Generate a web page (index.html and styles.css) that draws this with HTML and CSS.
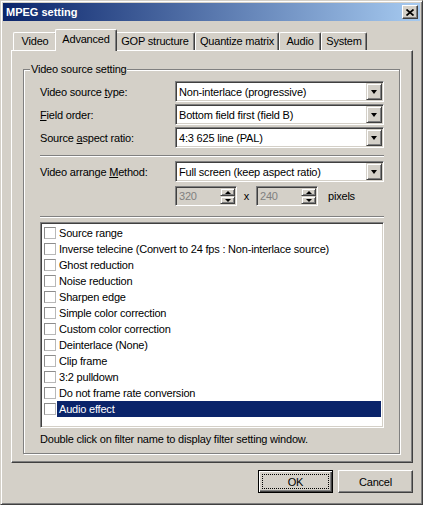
FILE: index.html
```html
<!DOCTYPE html>
<html>
<head>
<meta charset="utf-8">
<link rel="stylesheet" href="styles.css">
</head>
<body>
<div class="window">
  <div class="titlebar">
    <span class="title">MPEG setting</span>
    <span class="close">
      <svg width="8" height="7" viewBox="0 0 8 7"><path d="M0.5 0.5 L7.5 6.5 M7.5 0.5 L0.5 6.5" stroke="#000" stroke-width="1.7" fill="none"/></svg>
    </span>
  </div>
  <div class="content">
    <div class="tabs">
      <div class="tab t-video">Video</div>
      <div class="tab sel t-adv">Advanced</div>
      <div class="tab t-gop">GOP structure</div>
      <div class="tab t-quant">Quantize matrix</div>
      <div class="tab t-audio">Audio</div>
      <div class="tab t-sys">System</div>
    </div>
    <div class="panel">
      <div class="group">
        <div class="group-title">Video source setting</div>
        <div class="group-body">
          <div class="row first">
            <span class="label">Video source <u>t</u>ype:</span>
            <div class="combo"><span class="val">Non-interlace (progressive)</span><span class="drop"><i class="tri-down"></i></span></div>
          </div>
          <div class="row">
            <span class="label"><u>F</u>ield order:</span>
            <div class="combo"><span class="val">Bottom field first (field B)</span><span class="drop"><i class="tri-down"></i></span></div>
          </div>
          <div class="row">
            <span class="label">Source <u>a</u>spect ratio:</span>
            <div class="combo"><span class="val">4:3 625 line (PAL)</span><span class="drop"><i class="tri-down"></i></span></div>
          </div>
          <div class="sep sep1"></div>
          <div class="row">
            <span class="label">Video arrange <u>M</u>ethod:</span>
            <div class="combo"><span class="val">Full screen (keep aspect ratio)</span><span class="drop"><i class="tri-down"></i></span></div>
          </div>
          <div class="spin-row">
            <div class="spin"><span class="val">320</span><span class="spin-btns"><span class="sb"><i class="tri-up"></i></span><span class="sb"><i class="tri-dn"></i></span></span></div>
            <span class="times">x</span>
            <div class="spin"><span class="val">240</span><span class="spin-btns"><span class="sb"><i class="tri-up"></i></span><span class="sb"><i class="tri-dn"></i></span></span></div>
            <span class="pixels">pixels</span>
          </div>
          <div class="sep sep2"></div>
          <div class="list">
            <div class="item"><span class="chk"></span><span class="name">Source range</span></div>
            <div class="item"><span class="chk"></span><span class="name">Inverse telecine (Convert to 24 fps : Non-interlace source)</span></div>
            <div class="item"><span class="chk"></span><span class="name">Ghost reduction</span></div>
            <div class="item"><span class="chk"></span><span class="name">Noise reduction</span></div>
            <div class="item"><span class="chk"></span><span class="name">Sharpen edge</span></div>
            <div class="item"><span class="chk"></span><span class="name">Simple color correction</span></div>
            <div class="item"><span class="chk"></span><span class="name">Custom color correction</span></div>
            <div class="item"><span class="chk"></span><span class="name">Deinterlace (None)</span></div>
            <div class="item"><span class="chk"></span><span class="name">Clip frame</span></div>
            <div class="item"><span class="chk"></span><span class="name">3:2 pulldown</span></div>
            <div class="item"><span class="chk"></span><span class="name">Do not frame rate conversion</span></div>
            <div class="item selected"><span class="chk"></span><span class="name">Audio effect</span></div>
          </div>
          <div class="hint">Double click on filter name to display filter setting window.</div>
        </div>
      </div>
    </div>
    <div class="buttons">
      <div class="btn default"><span class="focus">OK</span></div>
      <div class="btn">Cancel</div>
    </div>
  </div>
</div>
</body>
</html>
```
FILE: styles.css
```css
* { box-sizing: border-box; }
html, body { margin: 0; padding: 0; }
body {
  background: #D4D0C8;
  font-family: "Liberation Sans", Arial, sans-serif;
  font-size: 11px;
  letter-spacing: -0.2px;
  color: #000;
}
.window {
  width: 423px;
  height: 505px;
  border: 1px solid;
  border-color: #D4D0C8 #404040 #404040 #D4D0C8;
  box-shadow: inset 1px 1px 0 #fff, inset -1px -1px 0 #808080;
  padding: 2px;
  display: flex;
  flex-direction: column;
  background: #D4D0C8;
}
.titlebar {
  height: 18px;
  background: linear-gradient(to right, #0A246A, #A6CAF0);
  display: flex;
  align-items: center;
  padding: 0 2px 0 3px;
  color: #fff;
  font-weight: bold;
  letter-spacing: 0;
  flex: none;
}
.title { line-height: 18px; }
.close {
  margin-left: auto;
  width: 16px;
  height: 14px;
  background: #D4D0C8;
  border: 1px solid;
  border-color: #fff #404040 #404040 #fff;
  box-shadow: inset -1px -1px 0 #808080;
  display: flex;
  align-items: center;
  justify-content: center;
}
.close svg { display: block; }
.content {
  padding: 8px 7px 0 8px;
  display: flex;
  flex-direction: column;
}
.tabs {
  display: flex;
  align-items: flex-end;
  height: 21px;
  padding-left: 2px;
}
.tab {
  height: 18px;
  line-height: 17px;
  text-align: center;
  border: 1px solid;
  border-bottom: none;
  border-color: #fff #404040 #404040 #fff;
  box-shadow: inset -1px 0 0 #808080;
  border-radius: 2px 2px 0 0;
  white-space: nowrap;
  background: #D4D0C8;
}
.tab.sel {
  height: 22px;
  margin: 0 -2px -1px -2px;
  line-height: 19px;
  position: relative;
  z-index: 1;
}
.t-video { width: 44px; }
.t-adv { width: 62px; }
.t-gop { width: 80px; }
.t-quant { width: 84px; }
.t-audio { width: 42px; }
.t-sys { width: 46px; }
.panel {
  height: 413px;
  border: 1px solid;
  border-color: #fff #404040 #404040 #fff;
  box-shadow: inset -1px -1px 0 #808080;
  padding: 18px 12px 8px 11px;
  display: flex;
  flex-direction: column;
}
.group {
  flex: 1;
  border: 1px solid #808080;
  box-shadow: inset 1px 1px 0 #fff, 1px 1px 0 #fff;
  display: flex;
  flex-direction: column;
}
.group-title {
  margin: -7px 0 0 6px;
  padding: 0 1px;
  line-height: 13px;
  background: #D4D0C8;
  width: fit-content;
}
.group-body {
  padding: 0 15px 0 16px;
  display: flex;
  flex-direction: column;
}
.row {
  display: flex;
  align-items: center;
  margin-top: 2px;
}
.row.first { margin-top: 5px; }
.label { width: 135px; flex: none; white-space: nowrap; }
.combo {
  flex: 1;
  height: 21px;
  border: 1px solid;
  border-color: #808080 #fff #fff #808080;
  box-shadow: inset 1px 1px 0 #404040, inset -1px -1px 0 #D4D0C8;
  background: #fff;
  padding: 1px;
  display: flex;
  align-items: center;
}
.combo .val { flex: 1; padding-left: 2px; white-space: nowrap; }
.drop {
  width: 16px;
  height: 17px;
  background: #D4D0C8;
  border: 1px solid;
  border-color: #D4D0C8 #404040 #404040 #D4D0C8;
  box-shadow: inset 1px 1px 0 #fff, inset -1px -1px 0 #808080;
  display: flex;
  align-items: center;
  justify-content: center;
}
.tri-down {
  width: 0; height: 0;
  border-left: 3.5px solid transparent;
  border-right: 3.5px solid transparent;
  border-top: 4px solid #000;
  display: block;
}
.sep {
  height: 2px;
  border-top: 1px solid #808080;
  border-bottom: 1px solid #fff;
}
.sep1 { margin: 7px 0 4px; }
.sep1 + .row { margin-top: 0; }
.spin-row {
  display: flex;
  align-items: center;
  margin-top: 4px;
  padding-left: 135px;
}
.spin {
  width: 62px;
  height: 20px;
  border: 1px solid;
  border-color: #808080 #fff #fff #808080;
  box-shadow: inset 1px 1px 0 #404040, inset -1px -1px 0 #D4D0C8;
  background: #D4D0C8;
  padding: 1px;
  display: flex;
  align-items: center;
}
.spin .val { flex: 1; color: #808080; padding-left: 2px; }
.spin-btns {
  width: 15px;
  height: 16px;
  display: flex;
  flex-direction: column;
}
.sb {
  flex: 1;
  border: 1px solid;
  border-color: #D4D0C8 #404040 #404040 #D4D0C8;
  box-shadow: inset 1px 1px 0 #fff, inset -1px -1px 0 #808080;
  display: flex;
  align-items: center;
  justify-content: center;
}
.tri-up {
  width: 0; height: 0;
  border-left: 3px solid transparent;
  border-right: 3px solid transparent;
  border-bottom: 3px solid #000;
  display: block;
}
.tri-dn {
  width: 0; height: 0;
  border-left: 3px solid transparent;
  border-right: 3px solid transparent;
  border-top: 3px solid #000;
  display: block;
}
.times { width: 19px; text-align: center; }
.pixels { margin-left: 10px; }
.sep2 { margin: 10px 0 4px; }
.list {
  height: 206px;
  border: 1px solid;
  border-color: #808080 #fff #fff #808080;
  box-shadow: inset 1px 1px 0 #404040, inset -1px -1px 0 #D4D0C8;
  background: #fff;
  padding: 2px 2px 0 2px;
}
.item {
  height: 16px;
  display: flex;
  align-items: center;
}
.chk {
  width: 12px;
  height: 12px;
  margin-left: 1px;
  border: 1px solid;
  border-color: #8c8c8c #b8b8b8 #b8b8b8 #8c8c8c;
  background: #fff;
  flex: none;
}
.name {
  flex: 1;
  margin-left: 1px;
  padding-left: 2px;
  height: 16px;
  line-height: 16px;
  white-space: nowrap;
}
.item.selected .name { background: #0A246A; color: #fff; }
.hint { margin-top: 5px; line-height: 13px; white-space: nowrap; }
.buttons {
  display: flex;
  justify-content: flex-end;
  gap: 5px;
  margin-top: 7px;
}
.btn {
  width: 75px;
  height: 23px;
  border: 1px solid;
  border-color: #fff #404040 #404040 #fff;
  box-shadow: inset -1px -1px 0 #808080;
  display: flex;
  align-items: center;
  justify-content: center;
}
.btn.default {
  border-color: #000;
  box-shadow: inset 1px 1px 0 #fff, inset -1px -1px 0 #404040, inset -2px -2px 0 #808080;
  padding: 3px;
}
.focus {
  flex: 1;
  align-self: stretch;
  border: 1px dotted #000;
  display: flex;
  align-items: center;
  justify-content: center;
}
```
